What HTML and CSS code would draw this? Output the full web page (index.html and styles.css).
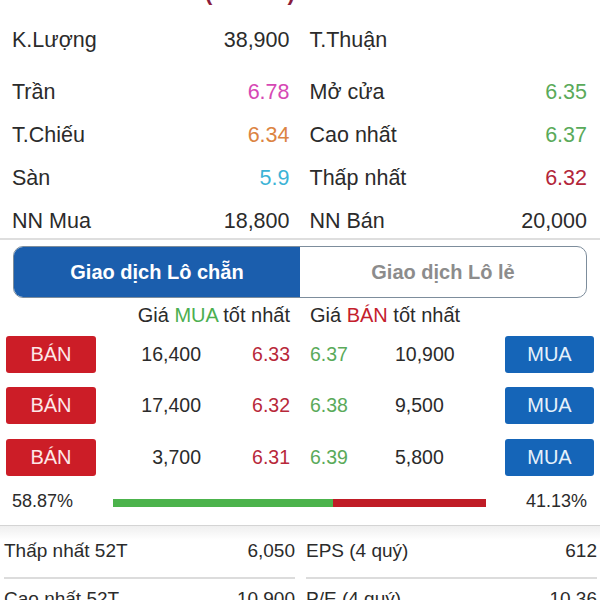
FILE: index.html
```html
<!DOCTYPE html>
<html lang="vi">
	<head>
		<meta charset="utf-8">
		<title>Chi tiết mã</title>
		<link rel="stylesheet" href="styles.css">
	</head>
	<body>
<div class="title"><span>(+0.47%)</span></div>

<div class="stats">
	<div class="cell first"><span>K.Lượng</span><span>38,900</span></div>
	<div class="cell first"><span>T.Thuận</span><span></span></div>
	<div class="cell"><span>Trần</span><span class="ceil">6.78</span></div>
	<div class="cell"><span>Mở cửa</span><span class="up">6.35</span></div>
	<div class="cell"><span>T.Chiếu</span><span class="ref">6.34</span></div>
	<div class="cell"><span>Cao nhất</span><span class="up">6.37</span></div>
	<div class="cell"><span>Sàn</span><span class="floor">5.9</span></div>
	<div class="cell"><span>Thấp nhất</span><span class="down">6.32</span></div>
	<div class="cell last"><span>NN Mua</span><span>18,800</span></div>
	<div class="cell last"><span>NN Bán</span><span>20,000</span></div>
</div>

<div class="tabs">
	<div class="tab active">Giao dịch Lô chẵn</div>
	<div class="tab">Giao dịch Lô lẻ</div>
</div>

<div class="book">
	<div class="head left">Giá <span class="green">MUA</span> tốt nhất</div>
	<div class="head right">Giá <span class="red">BÁN</span> tốt nhất</div>

	<div class="btn sell">BÁN</div><div class="qty">16,400</div><div class="bid">6.33</div>
	<div></div>
	<div class="ask">6.37</div><div class="qty ask-qty">10,900</div><div class="btn buy">MUA</div>

	<div class="btn sell">BÁN</div><div class="qty">17,400</div><div class="bid">6.32</div>
	<div></div>
	<div class="ask">6.38</div><div class="qty ask-qty">9,500</div><div class="btn buy">MUA</div>

	<div class="btn sell">BÁN</div><div class="qty">3,700</div><div class="bid">6.31</div>
	<div></div>
	<div class="ask">6.39</div><div class="qty ask-qty">5,800</div><div class="btn buy">MUA</div>
</div>

<div class="ratio">
	<span>58.87%</span>
	<div class="bar"><div class="bar-buy" style="width: 58.87%"></div><div class="bar-sell"></div></div>
	<span>41.13%</span>
</div>

<div class="info">
	<div class="item"><span>Thấp nhất 52T</span><span>6,050</span></div>
	<div class="item"><span>EPS (4 quý)</span><span>612</span></div>
	<div class="item"><span>Cao nhất 52T</span><span>10,900</span></div>
	<div class="item"><span>P/E (4 quý)</span><span>10.36</span></div>
</div>
	</body>
</html>
```

FILE: styles.css
```css
body {
	margin: 0;
	font-family: "Liberation Sans", Arial, sans-serif;
	color: #2b2b2b;
	background: #fff;
	overflow: hidden;
}
.title {
	height: 6px;
	overflow: hidden;
	padding-left: 205px;
	color: #8b1c3c;
	font-size: 22px;
	font-weight: bold;
}
.title span { display: block; margin-top: -20px; line-height: 26px; }

/* thong tin chung */
.stats {
	display: grid;
	grid-template-columns: 1fr 1fr;
	column-gap: 20px;
	padding: 13px 13px 0 12px;
	font-size: 21.5px;
	border-bottom: 2px solid #dedede;
}
.cell {
	display: flex;
	justify-content: space-between;
	align-items: center;
	height: 43px;
}
.cell.first { margin-bottom: 9px; }
.cell.last { margin-bottom: -5px; }
.ceil { color: #d648b4; }
.ref { color: #dc8442; }
.floor { color: #3cb3d6; }
.up { color: #5aaa5a; }
.down { color: #b3263a; }

/* tab lo chan / lo le */
.tabs {
	display: grid;
	grid-template-columns: 1fr 1fr;
	margin: 6px 13px 0 13px;
	height: 50px;
	border: 1px solid #7d8d9c;
	border-radius: 10px;
	overflow: hidden;
	font-size: 20px;
	font-weight: bold;
}
.tab {
	display: flex;
	align-items: center;
	justify-content: center;
	color: #8c8c8c;
}
.tab.active { background: #1b5ead; color: #fff; }

/* so lenh */
.book {
	display: grid;
	grid-template-columns: 90px 105px 89px 20px 85px 110px 89px;
	row-gap: 14.5px;
	padding: 5px 6px 0 6px;
	font-size: 19.5px;
	align-items: center;
}
.head { font-size: 20px; line-height: 24px; margin-bottom: -6px; }
.head.left { grid-column: 1 / 4; text-align: right; }
.head.right { grid-column: 4 / 8; padding-left: 20px; }
.green { color: #4caf50; }
.red { color: #c4202c; }
.btn {
	height: 37px;
	line-height: 37px;
	border-radius: 3px;
	text-align: center;
	color: #fff;
	font-size: 20px;
}
.sell { background: #cc1d27; color: #fde8e8; }
.buy { background: #1565b8; color: #e6f1fb; }
.qty { text-align: right; }
.ask-qty { text-align: left; }
.bid { text-align: right; color: #b8283a; }
.ask { color: #5aaa5a; }

.ratio {
	display: flex;
	align-items: center;
	justify-content: space-between;
	padding: 0 13px 0 12px;
	height: 46px;
	margin-top: 3px;
	font-size: 18px;
	border-bottom: 1px solid #d4d4d4;
}
.bar {
	display: flex;
	width: 373px;
	height: 8px;
	margin-top: 2px;
}
.bar-buy { background: #4cb34c; }
.bar-sell { flex: 1; background: #c01c26; }

/* chi so co ban */
.info {
	display: grid;
	grid-template-columns: 1fr 1fr;
	column-gap: 11px;
	padding: 5px 3px 0 4px;
	background: linear-gradient(#efefef, #fff 14px);
	font-size: 19px;
}
.item {
	display: flex;
	justify-content: space-between;
	align-items: center;
	height: 40px;
	padding-bottom: 6px;
	border-bottom: 2px solid #dcdcdc;
}
```
